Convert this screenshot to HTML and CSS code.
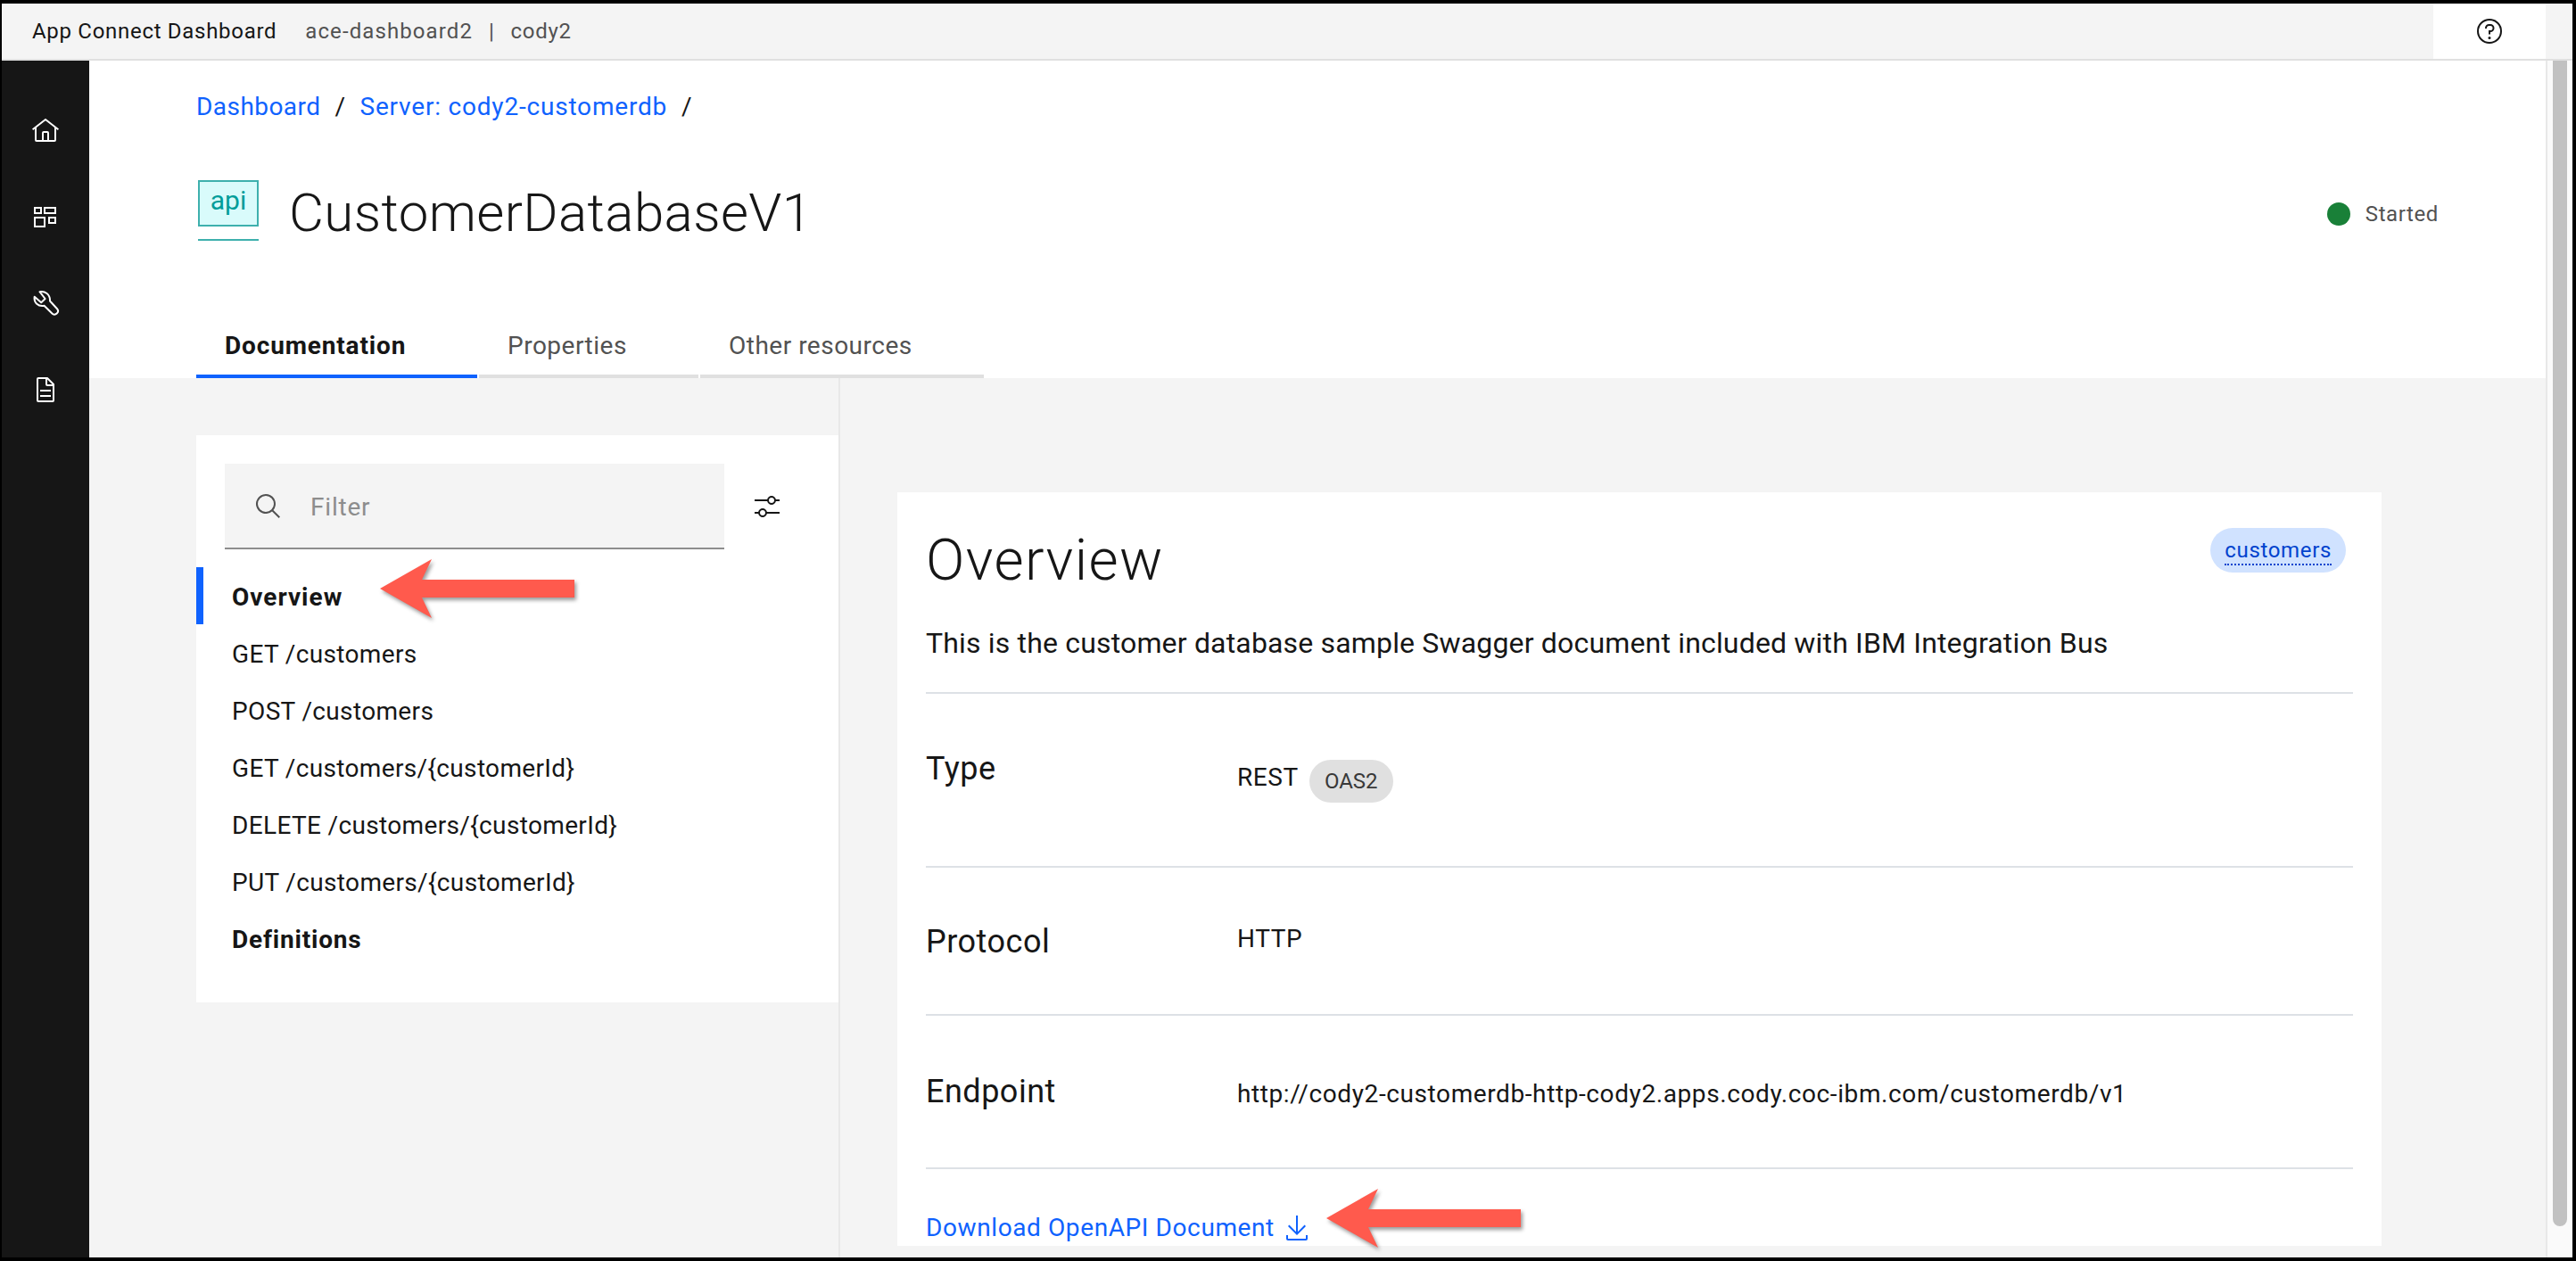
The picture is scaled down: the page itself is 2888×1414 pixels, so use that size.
FILE: index.html
```html
<!DOCTYPE html>
<html lang="en">
<head>
    <meta charset="UTF-8">
    <title>App Connect Dashboard</title>
    <link rel="stylesheet" href="styles.css">
</head>
<body>
<div class="frame">
    <div class="app">
        <header class="topbar">
            <span class="product">App Connect Dashboard</span>
            <span class="instance">ace-dashboard2</span>
            <span class="sep">|</span>
            <span class="namespace">cody2</span>
            <div class="help">
                <svg width="32" height="32" viewBox="0 0 32 32" fill="#161616"><path d="M16 2a14 14 0 1 0 14 14A14 14 0 0 0 16 2zm0 26a12 12 0 1 1 12-12 12 12 0 0 1-12 12z"/><circle cx="16" cy="23.5" r="1.5"/><path d="M17 8h-1.5a4.49 4.49 0 0 0-4.5 4.5v.5h2v-.5a2.5 2.5 0 0 1 2.5-2.5H17a2.5 2.5 0 0 1 0 5h-2v4.5h2V17a4.5 4.5 0 0 0 0-9z"/></svg>
            </div>
        </header>
        <div class="body">
            <nav class="rail">
                <div class="rail-item"><svg width="32" height="32" viewBox="0 0 32 32" fill="#fff"><path d="M16.6 2.2a1 1 0 0 0-1.2 0L1 13.4l1.2 1.6L4 13.6V26a2 2 0 0 0 2 2h20a2 2 0 0 0 2-2V13.6l1.8 1.4 1.2-1.6zM18 26h-4v-8h4zm2 0v-8a2 2 0 0 0-2-2h-4a2 2 0 0 0-2 2v8H6V12l10-7.8L26 12v14z"/></svg></div>
                <div class="rail-item"><svg width="28" height="26" viewBox="0 0 28 26" fill="none" stroke="#fff" stroke-width="2"><rect x="2" y="2" width="7" height="6"/><rect x="13" y="2" width="12" height="6"/><rect x="2" y="13" width="11" height="10"/><rect x="18" y="13" width="7" height="6"/></svg></div>
                <div class="rail-item"><svg width="32" height="32" viewBox="0 0 32 32" fill="none" stroke="#fff" stroke-width="2" stroke-linejoin="round"><path d="M9.5 3.2C15 2 21.5 6 21 13.5l8 8.7c1.5 1.7 1.2 4-.3 5.4-1.6 1.5-3.9 1.4-5.3-.1l-8.9-8.7C8 20 2.6 15.5 3.7 8.7L11.2 15.2 15.6 11z"/></svg></div>
                <div class="rail-item"><svg width="32" height="32" viewBox="0 0 32 32" fill="#fff"><path d="M25.7 9.3l-7-7A.91.91 0 0 0 18 2H8a2 2 0 0 0-2 2v24a2 2 0 0 0 2 2h16a2 2 0 0 0 2-2V10a.91.91 0 0 0-.3-.7zM18 4.4l5.6 5.6H18zM24 28H8V4h8v6a2 2 0 0 0 2 2h6z"/><path d="M10 22h12v2H10zM10 16h12v2H10z"/></svg></div>
            </nav>
            <main class="main">
                <section class="page-head">
                    <div class="breadcrumb">
                        <a href="#">Dashboard</a><span class="slash">/</span><a class="crumb-server" href="#">Server: cody2-customerdb</a><span class="slash">/</span>
                    </div>
                    <div class="title-row">
                        <div class="api-icon"><div class="api-box">api</div><div class="api-line"></div></div>
                        <h1>CustomerDatabaseV1</h1>
                        <div class="status"><span class="dot"></span>Started</div>
                    </div>
                    <div class="tabs">
                        <div class="tab tab-active">Documentation</div>
                        <div class="tab tab-props">Properties</div>
                        <div class="tab tab-other">Other resources</div>
                    </div>
                </section>
                <section class="content">
                    <aside class="side">
                        <div class="side-panel">
                            <div class="filter-row">
                                <div class="filter">
                                    <svg width="32" height="32" viewBox="0 0 32 32" fill="#525252"><path d="M30 28.59L22.45 21A11 11 0 1 0 21 22.45L28.59 30zM5 14a9 9 0 1 1 9 9 9 9 0 0 1-9-9z"/></svg>
                                    <span class="filter-text">Filter</span>
                                </div>
                                <svg class="sliders" width="32" height="32" viewBox="0 0 32 32" fill="#161616"><path d="M30 8h-4.1c-.5-2.3-2.5-4-4.9-4s-4.4 1.7-4.9 4H2v2h14.1c.5 2.3 2.5 4 4.9 4s4.4-1.7 4.9-4H30V8zm-9 4c-1.7 0-3-1.3-3-3s1.3-3 3-3 3 1.3 3 3-1.3 3-3 3zM2 24h4.1c.5 2.3 2.5 4 4.9 4s4.4-1.7 4.9-4H30v-2H15.9c-.5-2.3-2.5-4-4.9-4s-4.4 1.7-4.9 4H2v2zm9-4c1.7 0 3 1.3 3 3s-1.3 3-3 3-3-1.3-3-3 1.3-3 3-3z"/></svg>
                            </div>
                            <ul class="ops">
                                <li class="op op-active">Overview</li>
                                <li class="op">GET /customers</li>
                                <li class="op">POST /customers</li>
                                <li class="op">GET /customers/{customerId}</li>
                                <li class="op">DELETE /customers/{customerId}</li>
                                <li class="op">PUT /customers/{customerId}</li>
                                <li class="op op-bold">Definitions</li>
                            </ul>
                        </div>
                    </aside>
                    <article class="card">
                        <div class="card-head">
                            <h2>Overview</h2>
                            <span class="tag"><span class="tag-text">customers</span></span>
                        </div>
                        <p class="desc">This is the customer database sample Swagger document included with IBM Integration Bus</p>
                        <div class="row row-type">
                            <div class="label">Type</div>
                            <div class="value">REST <span class="chip">OAS2</span></div>
                        </div>
                        <div class="row row-protocol">
                            <div class="label">Protocol</div>
                            <div class="value">HTTP</div>
                        </div>
                        <div class="row row-endpoint">
                            <div class="label">Endpoint</div>
                            <div class="value">http://cody2-customerdb-http-cody2.apps.cody.coc-ibm.com/customerdb/v1</div>
                        </div>
                        <a class="download" href="#">Download OpenAPI Document
                            <svg width="32" height="32" viewBox="0 0 32 32" fill="#0f62fe"><path d="M26 24v4H6v-4H4v4a2 2 0 0 0 2 2h20a2 2 0 0 0 2-2v-4zM26 14l-1.41-1.41L17 20.17V2h-2v18.17l-7.59-7.58L6 14l10 10 10-10z"/></svg>
                        </a>
                    </article>
                </section>
            </main>
            <div class="scrollbar"><div class="thumb"></div></div>
        </div>
    </div>

    <!-- callout arrows drawn over the screenshot -->
    <svg class="callout callout-nav" width="226" height="74" viewBox="0 0 226 74"><path d="M4 35L62 2 51 25H222V45H51L62 68z"/></svg>
    <svg class="callout callout-download" width="226" height="74" viewBox="0 0 226 74"><path d="M4 35L62 2 51 25H222V45H51L62 68z"/></svg>
</div>
</body>
</html>
```

FILE: styles.css
```css
* {
    box-sizing: border-box;
}

html, body {
    margin: 0;
    padding: 0;
    height: 100%;
    overflow: hidden;
}

body {
    font-family: 'Roboto', 'Liberation Sans', sans-serif;
    color: #161616;
    background-color: #000;
}

a {
    color: #0f62fe;
    text-decoration: none;
}

.frame {
    height: 1414px;
    padding: 4px 4px 4px 2px;
    position: relative;
}

.app {
    height: 100%;
    display: flex;
    flex-direction: column;
    background-color: #fff;
    overflow: hidden;
}

/* top bar */
.topbar {
    flex: none;
    height: 64px;
    display: flex;
    align-items: center;
    padding-left: 34px;
    background-color: #f4f4f4;
    border-bottom: 2px solid #e0e0e0;
    font-size: 24px;
    letter-spacing: 0.7px;
    color: #525252;
}

.product {
    color: #161616;
    margin-right: 32px;
}

.instance {
    letter-spacing: 1.1px;
}

.sep {
    margin: 0 18px;
}

.help {
    margin-left: auto;
    margin-right: 30px;
    width: 126px;
    height: 62px;
    background-color: #fff;
    display: flex;
    align-items: center;
    justify-content: center;
}

.body {
    flex: 1;
    display: flex;
    min-height: 0;
}

.rail {
    flex: none;
    width: 98px;
    background-color: #161616;
    padding-top: 31px;
}

.rail-item {
    height: 96.5px;
    display: flex;
    align-items: center;
    justify-content: center;
}

.main {
    flex: 1;
    min-width: 0;
    background-color: #f4f4f4;
    overflow: hidden;
}

.scrollbar {
    flex: none;
    width: 30px;
    background-color: #fafafa;
    border-left: 2px solid #e8e8e8;
    padding: 0 6px;
}

.thumb {
    height: 1307px;
    background-color: #c1c1c1;
    border-radius: 0 0 8px 8px;
}

/* page header */
.page-head {
    height: 356px;
    background-color: #fff;
    padding: 32px 0 0 120px;
    display: flex;
    flex-direction: column;
}

.breadcrumb {
    font-size: 28px;
    line-height: 40px;
    letter-spacing: 0.45px;
    display: flex;
}

.crumb-server {
    letter-spacing: 0.8px;
}

.slash {
    margin: 0 16px;
    color: #161616;
}

.title-row {
    display: flex;
    align-items: flex-start;
    margin-top: 62px;
    height: 72px;
}

.api-icon {
    width: 68px;
    margin: 0 34px 0 2px;
}

.api-box {
    height: 52px;
    background-color: #d9fbfb;
    border: 2px solid #3eb0ad;
    color: #009d9a;
    font-size: 30px;
    line-height: 42px;
    text-align: center;
}

.api-line {
    height: 2px;
    margin-top: 14px;
    background-color: #3eb0ad;
}

h1 {
    margin: 0;
    font-size: 60px;
    font-weight: 300;
    letter-spacing: 0.4px;
    line-height: 74px;
}

.status {
    margin-left: auto;
    margin-right: 120px;
    display: flex;
    align-items: center;
    gap: 17px;
    font-size: 24px;
    letter-spacing: 0.6px;
    line-height: 76px;
    color: #525252;
}

.dot {
    width: 26px;
    height: 26px;
    border-radius: 50%;
    background-color: #198038;
}

.tabs {
    margin-top: auto;
    display: flex;
    gap: 2px;
}

.tab {
    height: 68px;
    padding: 14px 0 0 32px;
    font-size: 28px;
    letter-spacing: 0.5px;
    line-height: 36px;
    color: #525252;
    border-bottom: 4px solid #e0e0e0;
}

.tab-active {
    width: 315px;
    font-weight: 700;
    letter-spacing: 0.85px;
    color: #161616;
    border-bottom-color: #0f62fe;
}

.tab-props {
    width: 246px;
}

.tab-other {
    width: 318px;
}

/* content */
.content {
    display: flex;
    align-items: flex-start;
    padding-left: 120px;
}

.side {
    flex: none;
    width: 722px;
    height: 1000px;
    padding: 64px 0 0;
    border-right: 2px solid #e8e8e8;
}

.side-panel {
    width: 720px;
    height: 636px;
    background-color: #fff;
}

.filter-row {
    display: flex;
    align-items: center;
    padding: 32px 0 0 32px;
}

.filter {
    width: 560px;
    height: 96px;
    background-color: #f4f4f4;
    border-bottom: 2px solid #8d8d8d;
    display: flex;
    align-items: center;
    padding-left: 32px;
    gap: 32px;
    font-size: 28px;
    letter-spacing: 0.8px;
    color: #8d8d8d;
}

.filter-text {
    padding-top: 2px;
}

.sliders {
    margin-left: 32px;
}

.ops {
    list-style: none;
    margin: 20px 0 0;
    padding: 0;
}

.op {
    height: 64px;
    padding-left: 40px;
    font-size: 28px;
    letter-spacing: 0.35px;
    line-height: 67px;
}

.op-active {
    font-weight: 700;
    letter-spacing: 1px;
    padding-left: 32px;
    border-left: 8px solid #0f62fe;
}

.op-bold {
    font-weight: 700;
    letter-spacing: 0.8px;
}

.card {
    flex: none;
    width: 1664px;
    margin: 128px 0 0 64px;
    padding: 0 32px;
    background-color: #fff;
}

.card-head {
    height: 90px;
    display: flex;
    align-items: flex-start;
    justify-content: space-between;
}

h2 {
    margin: 38px 0 0 0;
    font-size: 64px;
    font-weight: 300;
    letter-spacing: 1.4px;
    line-height: 78px;
}

.tag {
    margin: 40px 8px 0 0;
    height: 50px;
    padding: 0 16px;
    border-radius: 25px;
    background-color: #d0e2ff;
    color: #0043ce;
    font-size: 24px;
    letter-spacing: 0.65px;
    display: flex;
    align-items: center;
}

.tag-text {
    border-bottom: 2px dotted #0043ce;
    height: 34px;
    line-height: 34px;
}

.desc {
    margin: 0;
    padding: 57px 0 0 0;
    height: 136px;
    font-size: 32px;
    letter-spacing: 0.17px;
    line-height: 44px;
    border-bottom: 2px solid #dde1e6;
}

.row {
    display: flex;
    border-bottom: 2px solid #dde1e6;
}

.row-type {
    height: 195px;
}

.row-protocol {
    height: 166px;
}

.row-endpoint {
    height: 172px;
}

.label {
    width: 349px;
    padding-top: 62px;
    font-size: 36px;
    letter-spacing: 0.5px;
    line-height: 44px;
}

.value {
    font-size: 28px;
    letter-spacing: 0.6px;
    line-height: 40px;
}

.row-type .value {
    padding-top: 74px;
}

.row-protocol .label {
    padding-top: 61px;
}

.row-protocol .value {
    padding-top: 60px;
}

.row-endpoint .label {
    padding-top: 63px;
}

.row-endpoint .value {
    padding-top: 68px;
}

.chip {
    display: inline-block;
    height: 48px;
    padding: 0 17px;
    margin-left: 5px;
    border-radius: 24px;
    background-color: #e0e0e0;
    color: #393939;
    font-size: 24px;
    letter-spacing: 0;
    line-height: 48px;
    vertical-align: -3px;
}

.download {
    display: flex;
    align-items: center;
    gap: 9px;
    margin: 46px 0 0 0;
    font-size: 28px;
    letter-spacing: 0.6px;
    line-height: 40px;
}

/* arrows */
.callout {
    position: absolute;
    fill: #ff5a4d;
    filter: drop-shadow(2px 3px 2px rgba(0, 0, 0, 0.4));
}

.callout-nav {
    left: 422px;
    top: 625px;
}

.callout-download {
    left: 1483px;
    top: 1331px;
}
```
